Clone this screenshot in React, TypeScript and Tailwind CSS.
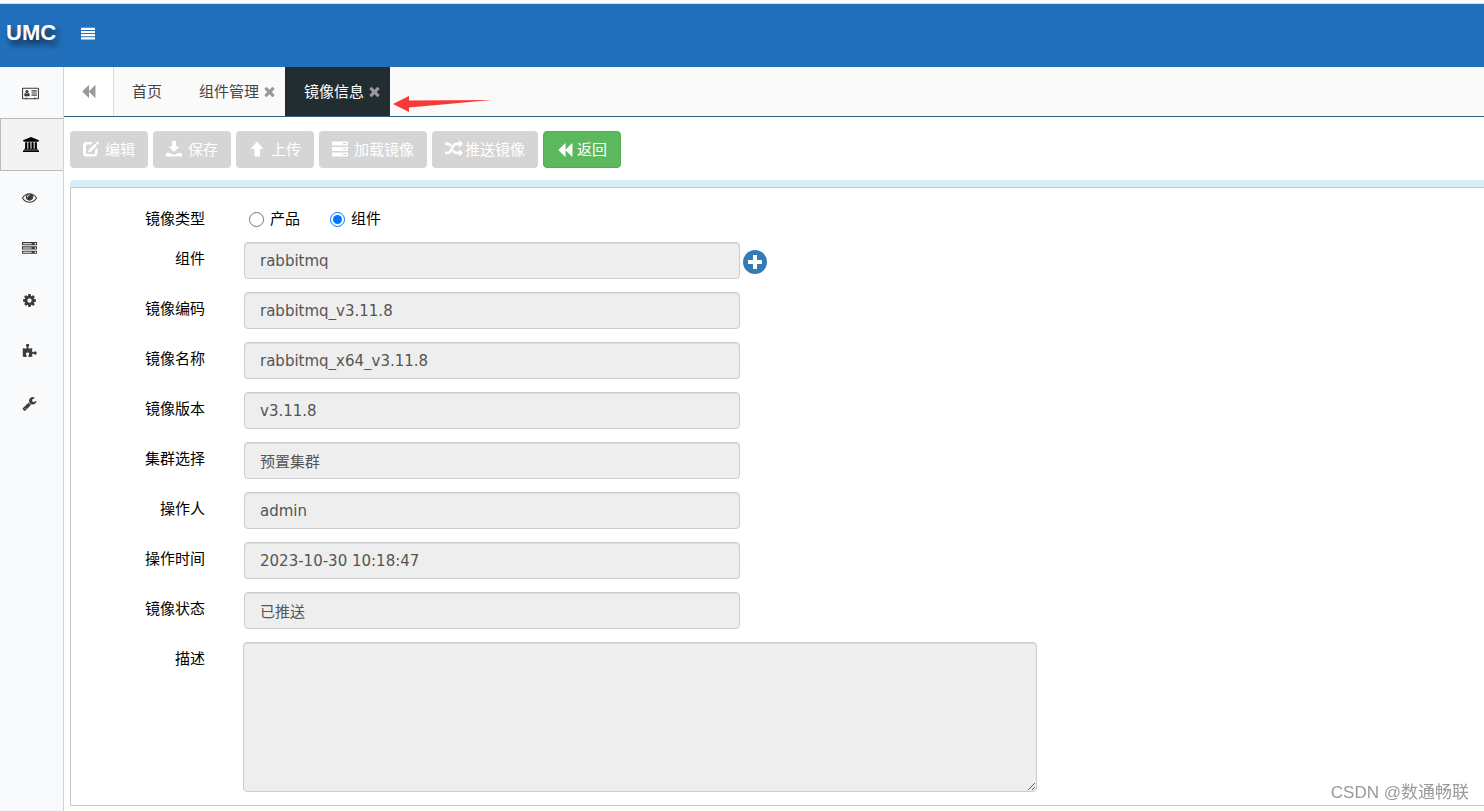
import { useState } from 'react';

interface IconProps {
  d: string;
  className?: string;
  viewBox?: string;
}

const Icon = ({ d, className, viewBox = '0 0 1792 1792' }: IconProps) => (
  <svg viewBox={viewBox} fill="currentColor" aria-hidden="true" className={className}>
    <path d={d} fillRule="evenodd" />
  </svg>
);

const icons = {
  card: 'M128 256h1792q53 0 90 37t37 90v1152q0 53-37 90t-90 37H128q-53 0-90-37t-37-90V384q0-53 37-90t90-38zm0 128v1152h256v-64h224v64h832v-64h224v64h256V384zM360 1280q-90 0-90-110c0-170 60-270 150-270q80 72 180 72t180-72c90 0 150 100 150 270q0 110-90 110zM600 530a195 195 0 1 1 0 390a195 195 0 0 1 0-390zM1152 576h640v128h-640zM1152 832h640v128h-640zM1152 1088h640v128h-640z',
  bank: 'M960 0l960 384v128h-128q0 26-20.5 45t-48.5 19h-1526q-28 0-48.5-19t-20.5-45h-128v-128zm-704 640h256v768h128v-768h256v768h128v-768h256v768h128v-768h256v768h59q28 0 48.5 19t20.5 45v64h-1664v-64q0-26 20.5-45t48.5-19h59v-768zm1595 960q28 0 48.5 19t20.5 45v128h-1920v-128q0-26 20.5-45t48.5-19h1782z',
  eye: 'M1664 960q-152-236-381-353 61 104 61 225 0 185-131.5 316.5t-316.5 131.5-316.5-131.5-131.5-316.5q0-121 61-225-229 117-381 353 133 205 333.5 326.5t434.5 121.5 434.5-121.5 333.5-326.5zm-720-384q0-20-14-34t-34-14q-125 0-214.5 89.5t-89.5 214.5q0 20 14 34t34 14 34-14 14-34q0-86 61-147t147-61q20 0 34-14t14-34zm848 384q0 34-20 69-140 230-376.5 368.5t-499.5 138.5-499.5-139-376.5-368q-20-35-20-69t20-69q140-229 376.5-368t499.5-139 499.5 139 376.5 368q20 35 20 69z',
  server: 'M128 1408h1024v-128h-1024v128zm0-512h1024v-128h-1024v128zm1568 448q0-40-28-68t-68-28-68 28-28 68 28 68 68 28 68-28 28-68zm-1568-960h1024v-128h-1024v128zm1568 448q0-40-28-68t-68-28-68 28-28 68 28 68 68 28 68-28 28-68zm0-512q0-40-28-68t-68-28-68 28-28 68 28 68 68 28 68-28 28-68zm96 832v384h-1792v-384h1792zm0-512v384h-1792v-384h1792zm0-512v384h-1792v-384h1792z',
  cog: 'M1152 896q0-106-75-181t-181-75-181 75-75 181 75 181 181 75 181-75 75-181zm512-109v222q0 12-8 23t-20 13l-185 28q-19 54-39 91 35 50 107 138 10 12 10 25t-9 23q-27 37-99 108t-94 71q-12 0-26-9l-138-108q-44 23-91 38-16 136-29 186-7 28-36 28h-222q-14 0-24.5-8.5t-11.5-21.5l-28-184q-49-16-90-37l-141 107q-10 9-25 9-14 0-25-11-126-114-165-168-7-10-7-23 0-12 8-23 15-21 51-66.5t54-70.5q-27-50-41-99l-183-27q-13-2-21-12.5t-8-23.5v-222q0-12 8-23t19-13l186-28q14-46 39-92-40-57-107-138-10-12-10-24 0-10 9-23 26-36 98.5-107.5t94.5-71.5q13 0 26 10l138 107q44-23 91-38 16-136 29-186 7-28 36-28h222q14 0 24.5 8.5t11.5 21.5l28 184q49 16 90 37l142-107q9-9 24-9 13 0 25 10 129 119 165 170 7 8 7 22 0 12-8 23-15 21-51 66.5t-54 70.5q26 50 41 98l183 28q13 2 21 12.5t8 23.5z',
  puzzle: 'M1755 1083q0 81-44.5 135t-123.5 54q-41 0-77.5-17.5t-59-38-56.5-38-71-17.5q-110 0-110 124 0 39 16 115t15 115v5q-22 0-33 1-34 3-97.5 11.5t-115.5 13.5-98 5q-61 0-103-26.5t-42-83.5q0-37 17.5-71t38-56.5 38-59 17.5-77.5q0-79-54-123.5t-135-44.5q-84 0-143 45.5t-59 127.5q0 43 15 83t33.5 64.5 33.5 53 15 50.5q0 45-46 89-37 35-117 35-95 0-245-24-9-2-27.5-4t-27.5-4l-13-2q-1 0-3-1-2 0-2-1v-1024q2 1 17.5 3.5t34 5 21.5 3.5q150 24 245 24 80 0 117-35 46-44 46-89 0-22-15-50.5t-33.5-53-33.5-64.5-15-83q0-82 59-127.5t144-45.5q80 0 134 44.5t54 123.5q0 41-17.5 77.5t-38 59-38 56.5-17.5 71q0 57 42 83.5t103 26.5q64 0 180-15t163-17v2q-1 2-3.5 17.5t-5 34-3.5 21.5q-24 150-24 245 0 80 35 117 44 46 89 46 22 0 50.5-15t53-33.5 64.5-33.5 83-15q82 0 127.5 59t45.5 143z',
  wrench: 'M448 1472q0-26-19-45t-45-19-45 19-19 45 19 45 45 19 45-19 19-45zm644-420l-682 682q-37 37-90 37-52 0-91-37l-106-108q-38-36-38-90 0-53 38-91l681-681q39 98 114.5 173.5t173.5 114.5zm634-435q0 39-23 106-47 134-164.5 217.5t-258.5 83.5q-185 0-316.5-131.5t-131.5-316.5 131.5-316.5 316.5-131.5q58 0 121.5 16.5t107.5 46.5q16 11 16 28t-16 28l-293 169v224l193 107q5-3 79-48.5t135.5-81 70.5-35.5q15 0 23.5 10t8.5 25z',
  backward: 'M1683 141q19-19 32-13t13 32v1472q0 26-13 32t-32-13l-710-710q-9-9-13-19v710q0 26-13 32t-32-13l-710-710q-19-19-19-45t19-45l710-710q19-19 32-13t13 32v710q4-10 13-19z',
  times: 'M1490 1322q0 40-28 68l-136 136q-28 28-68 28t-68-28l-294-294-294 294q-28 28-68 28t-68-28l-136-136q-28-28-28-68t28-68l294-294-294-294q-28-28-28-68t28-68l136-136q28-28 68-28t68 28l294 294 294-294q28-28 68-28t68 28l136 136q28 28 28 68t-28 68l-294 294 294 294q28 28 28 68z',
  random: 'M666 481q-60 92-137 273-22-45-37-72.5t-40.5-63.5-51-56.5-63-35-81.5-14.5h-224q-14 0-23-9t-9-23v-192q0-14 9-23t23-9h224q250 0 410 225zm1126 799q0 14-9 23l-320 320q-9 9-23 9-13 0-22.5-9.5t-9.5-22.5v-192q-32 0-85 .5t-81 1-73-1-71-5-64-10.5-63-18.5-58-28.5-59-40-55-53.5-56-69.5q59-93 136-273 22 45 37 72.5t40.5 63.5 51 56.5 63 35 81.5 14.5h256v-192q0-14 9-23t23-9q12 0 24 10l319 319q9 9 9 23zm0-896q0 14-9 23l-320 320q-9 9-23 9-13 0-22.5-9.5t-9.5-22.5v-192h-256q-48 0-87 15t-69 45-51 61.5-45 77.5q-32 62-78 171-29 66-49.5 111t-54 105-64 100-74 83-90 68.5-106.5 42-128 16.5h-224q-14 0-23-9t-9-23v-192q0-14 9-23t23-9h224q48 0 87-15t69-45 51-61.5 45-77.5q32-62 78-171 29-66 49.5-111t54-105 64-100 74-83 90-68.5 106.5-42 128-16.5h256v-192q0-14 9-23t23-9q12 0 24 10l319 319q9 9 9 23z',
  // 16px grid
  menu: 'M0 1.700h14v2.200H0zM0 4.900h14v2.200H0zM0 8.100h14v2.200H0zM0 11.300h14v2.200H0z',
  edit: 'M3.500 1H10L8 3.500H4.500q-1.500 0-1.500 1.500v6.500q0 1.500 1.500 1.500h6q1.500 0 1.500-1.500V9l2.500-2.500v5.500q0 3.500-3.500 3.500H3.500Q0 15.500 0 12V4.500Q0 1 3.500 1zM12 2.500l2 2L8 10.500l-3 1 1-3zM12.700 1.800l1-1q.6-.6 1.200 0l.8.8q.6.6 0 1.200l-1 1z',
  save: 'M6 0h4v5.500h3.500L8 11 2.500 5.500H6zM0 12h4.500l1.500 1.500h4l1.500-1.500H16v3.500H0z',
  up: 'M8 .5l6.500 7.500H11v7.500H5.500V8H1.500z',
  tasks: 'M1 .5h14q1 0 1 1v3H0v-3q0-1 1-1zM11 2v1h3.500v-1zM0 6h16v4H0zM11 7.500v1h3.500v-1zM0 11.500h16v3q0 1-1 1H1q-1 0-1-1zM11 13v1h3.500v-1z',
};

const menuItems = [
  { label: '名片', icon: icons.card, viewBox: '0 0 2048 1792', size: 'h-4 w-[17px]', active: false },
  { label: '组件', icon: icons.bank, viewBox: '0 0 1920 1792', size: 'h-[15px] w-4', active: true },
  { label: '监控', icon: icons.eye, viewBox: '0 0 1792 1792', size: 'size-[15px]', active: false },
  { label: '服务器', icon: icons.server, viewBox: '0 0 1792 1792', size: 'size-[15px]', active: false },
  { label: '设置', icon: icons.cog, viewBox: '0 0 1792 1792', size: 'size-[15px]', active: false },
  { label: '插件', icon: icons.puzzle, viewBox: '0 0 1792 1792', size: 'size-[15px]', active: false },
  { label: '工具', icon: icons.wrench, viewBox: '0 0 1792 1792', size: 'size-[15px]', active: false },
];

const actions = [
  { label: '编辑', icon: icons.edit, viewBox: '0 0 16 16', spacing: 'gap-[6px]', size: 'size-4' },
  { label: '保存', icon: icons.save, viewBox: '0 0 16 16', spacing: 'gap-[6px]', size: 'size-4' },
  { label: '上传', icon: icons.up, viewBox: '0 0 16 16', spacing: 'gap-[6px]', size: 'size-4' },
  { label: '加载镜像', icon: icons.tasks, viewBox: '0 0 16 16', spacing: 'gap-[6px]', size: 'size-4' },
  { label: '推送镜像', icon: icons.random, viewBox: '0 0 1792 1792', spacing: 'gap-[2px]', size: 'size-[18px]' },
];

const fields = [
  { id: 'component', label: '组件', value: 'rabbitmq', addable: true },
  { id: 'code', label: '镜像编码', value: 'rabbitmq_v3.11.8' },
  { id: 'name', label: '镜像名称', value: 'rabbitmq_x64_v3.11.8' },
  { id: 'version', label: '镜像版本', value: 'v3.11.8' },
  { id: 'cluster', label: '集群选择', value: '预置集群' },
  { id: 'operator', label: '操作人', value: 'admin' },
  { id: 'time', label: '操作时间', value: '2023-10-30 10:18:47' },
  { id: 'status', label: '镜像状态', value: '已推送' },
];

const labelClass = 'w-[134px] shrink-0 text-right';
const controlClass =
  'rounded border border-[#ccc] bg-[#eee] px-[15px] text-[#555] shadow-[inset_0_1px_1px_rgba(0,0,0,0.075)] outline-none';

function Header() {
  return (
    <header className="flex h-[67px] items-center border-t-[3px] border-white bg-[#2270bb] pb-1 text-white shadow-[inset_0_1px_0_#cfe2f2]">
      <span className="w-16 shrink-0 pl-[6px] font-['Liberation_Sans',sans-serif] text-[22px] leading-8 font-bold [text-shadow:3px_5px_6px_rgba(0,0,0,0.7)]">
        UMC
      </span>
      <button aria-label="菜单" className="ml-[17px]">
        <Icon d={icons.menu} viewBox="0 0 14 15" className="h-[15px] w-[14px]" />
      </button>
    </header>
  );
}

function Sidebar() {
  return (
    <nav className="w-16 shrink-0 border-r border-[#d0d3d8] bg-[#f8fafc] text-[#3c3c3c]">
      {menuItems.map((item) => (
        <a
          key={item.label}
          href="#"
          aria-label={item.label}
          className={
            item.active
              ? 'flex h-[53px] items-center border border-r-0 border-[#bbb] bg-[#f3f3f3] pl-[22px] text-black'
              : 'flex h-[51px] items-center pl-[22px] not-first:odd:h-[52px]'
          }
        >
          <Icon d={item.icon} viewBox={item.viewBox} className={item.size} />
        </a>
      ))}
    </nav>
  );
}

function TabBar() {
  return (
    <div className="relative flex h-[50px] border-b border-[#32627c] bg-[#fafafa] text-[#444]">
      <button aria-label="向左" className="flex w-[50px] items-center justify-center border-r border-[#ddd] bg-white text-[#999]">
        <Icon d={icons.backward} className="size-[15px]" />
      </button>
      <a href="#" className="flex items-center px-[18px]">首页</a>
      <a href="#" className="flex items-center gap-[3px] pr-2 pl-[19px]">
        组件管理
        <Icon d={icons.times} className="size-[15px] text-[#999]" />
      </a>
      <a href="#" className="flex items-center gap-[3px] bg-[#222d32] pr-2 pl-[19px] text-white">
        镜像信息
        <Icon d={icons.times} className="size-[15px] text-[#999]" />
      </a>
      <svg viewBox="0 0 100 18" className="absolute top-7 left-[329px] h-[18px] w-[100px]" aria-hidden="true">
        <path d="M0 9L16 1v4.500L99 5 16 12.500V17z" fill="#f83a37" />
      </svg>
    </div>
  );
}

export default function App() {
  const [type, setType] = useState('组件');

  return (
    <div className="flex min-h-screen flex-col bg-white font-['DejaVu_Sans','Noto_Sans_CJK_SC',sans-serif] text-[15px] leading-[22px] text-black">
      <Header />
      <div className="flex flex-1">
        <Sidebar />
        <main className="min-w-0 flex-1">
          <TabBar />

          {/* Toolbar */}
          <div className="flex gap-[5px] px-[6px] pt-[14px] pb-3">
            {actions.map((action) => (
              <button
                key={action.label}
                disabled
                className={`flex h-[37px] items-center rounded bg-[#d5d5d5] px-[13px] text-white ${action.spacing}`}
              >
                <Icon d={action.icon} viewBox={action.viewBox} className={`mb-[2px] ${action.size}`} />
                {action.label}
              </button>
            ))}
            <button className="flex h-[37px] items-center gap-1 rounded border border-[#4cae4c] bg-[#5cb85c] px-[13px] text-white">
              <Icon d={icons.backward} className="size-4" />
              返回
            </button>
          </div>

          {/* Image form */}
          <div className="ml-[6px] rounded-tl bg-[#d9edf7] pt-[7px]">
            <form className="border border-r-0 border-[#c8c8c8] bg-white pt-5 pb-[13px]">
              <div className="mb-3 flex h-[22px] items-center">
                <span className={labelClass}>镜像类型</span>
                <div className="ml-11 flex gap-[30px]">
                  {['产品', '组件'].map((option) => (
                    <label key={option} className="flex items-center gap-[6px]">
                      <input
                        type="radio"
                        name="type"
                        checked={type === option}
                        onChange={() => setType(option)}
                        className="size-[15px] accent-[#0075ff]"
                      />
                      {option}
                    </label>
                  ))}
                </div>
              </div>
              {fields.map((field) => (
                <div key={field.id} className="mb-[13px] flex items-start">
                  <label htmlFor={field.id} className={`${labelClass} pt-[6px]`}>{field.label}</label>
                  <input id={field.id} readOnly value={field.value} className={`ml-[39px] h-[37px] w-[496px] ${controlClass}`} />
                  {field.addable && (
                    <button type="button" aria-label="添加" className="mt-2 ml-[3px]">
                      <svg viewBox="0 0 24 24" className="size-6" aria-hidden="true">
                        <circle cx="12" cy="12" r="12" fill="#337ab7" />
                        <path d="M10 5h4v5h5v4h-5v5h-4v-5H5v-4h5z" fill="#fff" />
                      </svg>
                    </button>
                  )}
                </div>
              ))}
              <div className="flex items-start">
                <label htmlFor="description" className={`${labelClass} pt-[6px]`}>描述</label>
                <textarea id="description" readOnly className={`ml-[38px] h-[150px] w-[794px] ${controlClass}`} />
              </div>
            </form>
          </div>
        </main>
      </div>
      <p className="fixed right-[15px] bottom-[6px] font-['Liberation_Sans','Noto_Sans_CJK_SC',sans-serif] text-[17px] leading-6 text-[#999]">
        CSDN @数通畅联
      </p>
    </div>
  );
}
